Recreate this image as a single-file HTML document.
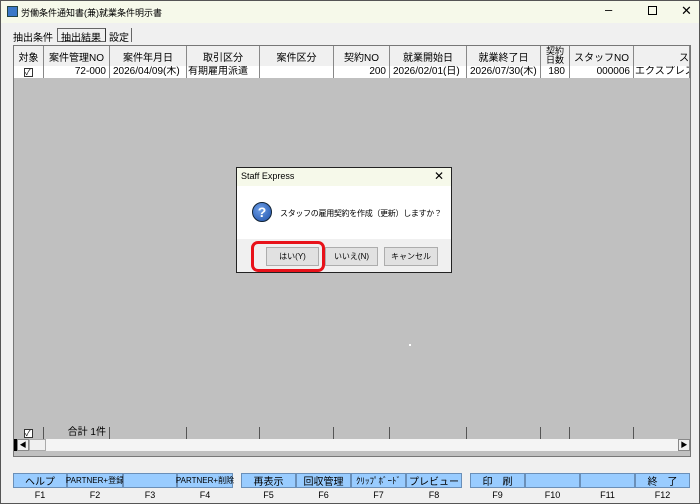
<!DOCTYPE html><html><head><meta charset="utf-8"><style>
*{box-sizing:border-box;margin:0;padding:0}
body{width:700px;height:504px;background:#f0f0f0;font-family:"Liberation Sans","Noto Sans CJK JP",sans-serif;font-size:11px;position:relative;overflow:hidden;border:1px solid #555}
.a{position:absolute}
.t{display:flex;align-items:center;justify-content:center;white-space:nowrap}
.hd{background:#f0f0f0;border-right:1px solid #888;height:20px;top:45px;font-size:10px}
.dc{top:65px;height:12px;background:#fff;border-right:1px solid #888;font-size:10px;line-height:12px;white-space:nowrap;overflow:hidden}
.fc{top:426px;height:12px;background:#c0c0c0;border-right:1px solid #555;font-size:10px;line-height:12px}
.btn{top:472px;height:15px;background:#99ccff;border:1px solid #6a8fb8;font-size:10px}
.fk{top:488px;height:12px;font-size:9px}
.db{top:246px;height:19px;width:53px;background:#e1e1e1;border:1px solid #adadad;font-size:8px}
</style></head><body>
<div class="a" style="left:0;top:0;width:698px;height:22px;background:#f6f9ea"></div>
<div class="a" style="left:6px;top:5px;width:11px;height:11px;background:#3a78c8;border:1px solid #244"></div>
<div class="a" style="left:20px;top:5px;font-size:9px">労働条件通知書(兼)就業条件明示書</div>
<div class="a" style="left:604px;top:1px;font-size:13px">–</div>
<div class="a" style="left:647px;top:5px;width:9px;height:9px;border:1px solid #000"></div>
<div class="a" style="left:680px;top:2px;font-size:13px">✕</div>
<div class="a" style="left:12px;top:28px;font-size:10px">抽出条件</div>
<div class="a" style="left:56px;top:27px;width:49px;height:14px;border:1px solid #666;border-right-color:#333;background:#f0f0f0;font-size:10px;padding-left:3px">抽出結果</div>
<div class="a" style="left:108px;top:28px;font-size:10px">設定</div>
<div class="a" style="left:130px;top:27px;width:1px;height:14px;background:#666"></div>
<div class="a" style="left:12px;top:44px;width:678px;height:412px;border:1px solid #777;background:#c0c0c0"></div>
<div class="a" style="left:13px;top:45px;width:676px;height:20px;background:#f0f0f0;border-bottom:1px solid #888"></div>
<div class="a t hd" style="left:13px;width:30px">対象</div>
<div class="a t hd" style="left:43px;width:66px">案件管理NO</div>
<div class="a t hd" style="left:109px;width:77px">案件年月日</div>
<div class="a t hd" style="left:186px;width:73px">取引区分</div>
<div class="a t hd" style="left:259px;width:74px">案件区分</div>
<div class="a t hd" style="left:333px;width:56px">契約NO</div>
<div class="a t hd" style="left:389px;width:77px">就業開始日</div>
<div class="a t hd" style="left:466px;width:74px">就業終了日</div>
<div class="a t hd" style="left:540px;width:29px;font-size:9px;line-height:9px;text-align:center">契約<br>日数</div>
<div class="a t hd" style="left:569px;width:64px">スタッフNO</div>
<div class="a t hd" style="left:633px;width:56px;justify-content:flex-end;overflow:hidden">ス</div>
<div class="a dc t" style="left:13px;width:30px"><span style="display:inline-block;width:9px;height:9px;border:1px solid #333;font-size:8px;line-height:7px">✓</span></div>
<div class="a dc" style="left:43px;width:66px;text-align:right;padding-right:3px">72-000</div>
<div class="a dc" style="left:109px;width:77px;padding-left:3px">2026/04/09(木)</div>
<div class="a dc" style="left:186px;width:73px;padding-left:1px">有期雇用派遣</div>
<div class="a dc" style="left:259px;width:74px"></div>
<div class="a dc" style="left:333px;width:56px;text-align:right;padding-right:3px">200</div>
<div class="a dc" style="left:389px;width:77px;padding-left:3px">2026/02/01(日)</div>
<div class="a dc" style="left:466px;width:74px;padding-left:3px">2026/07/30(木)</div>
<div class="a dc" style="left:540px;width:29px;text-align:right;padding-right:4px">180</div>
<div class="a dc" style="left:569px;width:64px;text-align:right;padding-right:3px">000006</div>
<div class="a dc" style="left:633px;width:56px;padding-left:1px">エクスプレス</div>
<div class="a" style="left:408px;top:343px;width:2px;height:2px;background:#fff"></div>
<div class="a fc t" style="left:13px;width:30px"><span style="display:inline-block;width:9px;height:9px;border:1px solid #333;background:#fff;font-size:8px;line-height:7px">✓</span></div>
<div class="a fc" style="left:43px;width:66px;text-align:right;padding-right:3px">合計 1件</div>
<div class="a fc" style="left:109px;width:77px"></div><div class="a fc" style="left:186px;width:73px"></div><div class="a fc" style="left:259px;width:74px"></div><div class="a fc" style="left:333px;width:56px"></div><div class="a fc" style="left:389px;width:77px"></div><div class="a fc" style="left:466px;width:74px"></div><div class="a fc" style="left:540px;width:29px"></div><div class="a fc" style="left:569px;width:64px"></div><div class="a fc" style="left:633px;width:56px;border:0"></div>
<div class="a" style="left:13px;top:438px;width:676px;height:12px;background:#f4f4f4"></div>
<div class="a" style="left:13px;top:438px;width:3px;height:12px;background:#000"></div>
<div class="a t" style="left:16px;top:438px;width:12px;height:12px;background:#f0f0f0;border:1px solid #888;font-size:7px">◀</div>
<div class="a" style="left:28px;top:438px;width:17px;height:12px;border:1px solid #aaa;background:#f0f0f0"></div>
<div class="a t" style="left:677px;top:438px;width:12px;height:12px;background:#f0f0f0;border:1px solid #888;font-size:7px">▶</div>
<div class="a btn t" style="left:12px;width:54px">ヘルプ</div>
<div class="a btn t" style="left:66px;width:56px;font-size:8px">PARTNER+登録</div>
<div class="a btn t" style="left:122px;width:54px"></div>
<div class="a btn t" style="left:176px;width:56px;font-size:8px">PARTNER+削除</div>
<div class="a btn t" style="left:240px;width:55px">再表示</div>
<div class="a btn t" style="left:295px;width:55px">回収管理</div>
<div class="a btn t" style="left:350px;width:55px;font-size:9px">ｸﾘｯﾌﾟﾎﾞｰﾄﾞ</div>
<div class="a btn t" style="left:405px;width:56px">プレビュー</div>
<div class="a btn t" style="left:469px;width:55px">印　刷</div>
<div class="a btn t" style="left:524px;width:55px"></div>
<div class="a btn t" style="left:579px;width:55px"></div>
<div class="a btn t" style="left:634px;width:55px">終　了</div>
<div class="a fk t" style="left:12px;width:54px">F1</div><div class="a fk t" style="left:66px;width:56px">F2</div><div class="a fk t" style="left:122px;width:54px">F3</div><div class="a fk t" style="left:176px;width:56px">F4</div>
<div class="a fk t" style="left:240px;width:55px">F5</div><div class="a fk t" style="left:295px;width:55px">F6</div><div class="a fk t" style="left:350px;width:55px">F7</div><div class="a fk t" style="left:405px;width:56px">F8</div>
<div class="a fk t" style="left:469px;width:55px">F9</div><div class="a fk t" style="left:524px;width:55px">F10</div><div class="a fk t" style="left:579px;width:55px">F11</div><div class="a fk t" style="left:634px;width:55px">F12</div>
<div class="a" style="left:235px;top:166px;width:216px;height:106px;border:1px solid #222;background:#f0f0f0"></div>
<div class="a" style="left:236px;top:167px;width:214px;height:18px;background:#f6f9ea"></div>
<div class="a" style="left:240px;top:170px;font-size:9px">Staff Express</div>
<div class="a" style="left:433px;top:168px;font-size:12px">✕</div>
<div class="a" style="left:236px;top:185px;width:214px;height:53px;background:#fff"></div>
<div class="a t" style="left:251px;top:201px;width:20px;height:20px;border-radius:50%;background:radial-gradient(circle at 40% 35%,#6fa0e8,#1c4fa8);border:1px solid #123;color:#fff;font-weight:bold;font-size:14px">?</div>
<div class="a" style="left:279px;top:207px;font-size:8px;letter-spacing:-0.3px">スタッフの雇用契約を作成（更新）しますか？</div>
<div class="a db t" style="left:265px">はい(Y)</div>
<div class="a db t" style="left:324px">いいえ(N)</div>
<div class="a db t" style="left:383px;width:54px">キャンセル</div>
<div class="a" style="left:250px;top:240px;width:74px;height:31px;border:3px solid #e8121a;border-radius:7px"></div>
</body></html>
